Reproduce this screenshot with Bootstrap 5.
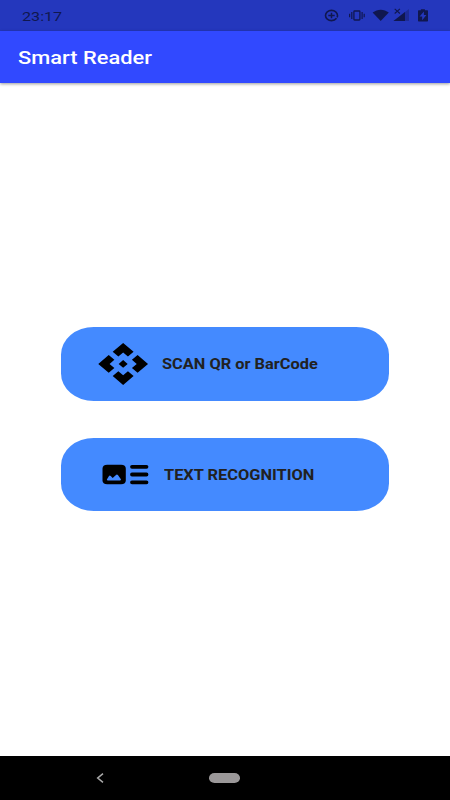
<!DOCTYPE html>
<html lang="en">
<head>
<meta charset="utf-8">
<meta name="viewport" content="width=device-width, initial-scale=1">
<title>Smart Reader</title>
<link href="https://cdn.jsdelivr.net/npm/bootstrap@5.3.0/dist/css/bootstrap.min.css" rel="stylesheet">
<style>
body { font-family: Roboto, sans-serif; height: 800px; overflow: hidden; }
svg { display: block; flex: none; }
.wide { display: inline-block; transform: scaleX(1.187); transform-origin: 0 50%; white-space: nowrap; line-height: 1; }
.status-bar { height: 31px; background: #2437bd; color: #10174f; padding-left: 22px; }
.clock { font-size: 13.6px; letter-spacing: 0; padding-top: 2px; }
.app-bar { height: 51.5px; background: #3149ff; padding-left: 17.5px; box-shadow: 0 1px 3px rgba(0,0,0,.4); z-index: 1; }
.app-title { font-size: 18.4px; font-weight: 500; padding-top: 2px; }
.choices { gap: 37px; padding-top: 244.7px; }
.choice { width: 328px; height: 73.5px; border: 0; border-radius: 32.8px / 27.6px; background: #448aff; color: #212121; padding: 0 0 0 35px; }
.choice-label { font-size: 13.8px; font-weight: 700; padding-top: 2px; }
.nav-strip { height: 44.5px; background: #000; padding-left: 96px; }
.home-pill { width: 31px; height: 9.5px; border-radius: 5.5px / 4.75px; background: #9b9899; margin-left: 105px; }
</style>
<script src="https://cdn.jsdelivr.net/npm/bootstrap@5.3.0/dist/js/bootstrap.bundle.min.js"></script>
</head>
<body class="bg-white d-flex flex-column m-0">
<div class="status-bar d-flex align-items-center flex-shrink-0">
  <span class="wide clock">23:17</span>
  <svg class="ms-auto" width="128" height="31" viewBox="322 0 128 31" fill="#10174f">
    <ellipse cx="331.5" cy="15.5" rx="6" ry="5.1" fill="none" stroke="#10174f" stroke-width="1.6" stroke-dasharray="33.6 1" stroke-dashoffset="-3"/>
    <path d="M328.3 15.5h6.4M331.5 12.8v5.4" stroke="#10174f" stroke-width="1.5"/>
    <rect x="353.9" y="11" width="6" height="9" rx=".7" fill="none" stroke="#10174f" stroke-width="1.3"/>
    <path d="M351.8 12v7M362.1 12v7M349.6 13.7v3.6M364.2 13.7v3.6" stroke="#10174f" stroke-width="1.2"/>
    <path d="M372.6 12.6C377.5 8.7 384 8.7 388.8 12.6L380.7 21z"/>
    <path d="M393.5 21L409 9v12z" opacity=".35"/>
    <path d="M393.5 21L405 12.1V21z"/>
    <path d="M394.7 8.8l5.2 4.7M399.9 8.8l-5.2 4.7" stroke="#10174f" stroke-width="1.1"/>
    <path fill-rule="evenodd" d="M418.7 10.3h2.2V9.2h4v1.1h2.4q.7 0 .7.7v9.7q0 .7-.7.7h-8.6q-.7 0-.7-.7V11q0-.7.7-.7zM423.9 11.5l-4.3 5.1h2.6v3.7l4.2-5.3h-2.5z"/>
  </svg>
</div>
<header class="app-bar d-flex align-items-center flex-shrink-0 text-white position-relative">
  <h1 class="wide app-title m-0">Smart Reader</h1>
</header>
<main class="choices flex-grow-1 d-flex flex-column align-items-center">
  <button type="button" class="choice btn d-flex align-items-center">
    <svg width="54.3" height="45.8" viewBox="0 0 24 24" preserveAspectRatio="none"><path d="M14 12l-2 2-2-2 2-2 2 2zm-2-6l2.12 2.12 2.5-2.5L12 1 7.38 5.62l2.5 2.5L12 6zm-6 6l2.12-2.12-2.5-2.5L1 12l4.62 4.62 2.5-2.5L6 12zm12 0l-2.12 2.12 2.5 2.5L23 12l-4.62-4.62-2.5 2.5L18 12zm-6 6l-2.12-2.12-2.5 2.5L12 23l4.62-4.62-2.5-2.5L12 18z"/></svg>
    <span class="wide choice-label" style="margin-left:11.7px">SCAN QR or BarCode</span>
  </button>
  <button type="button" class="choice btn d-flex align-items-center">
    <svg width="54.3" height="45.8" viewBox="96 451.9 54.3 45.8"><path d="M107.2 464.7h13.9q4.7 0 4.7 4v11.5q0 4-4.7 4h-13.9q-4.7 0-4.7-4v-11.5q0-4 4.7-4z"/><path fill="#448aff" d="M107.8 480.3q-1.4-.2-.8-1.2l2-3.1q.8-1 1.7 0l2 2 3.3-3.2q1-.8 1.9.2l3 4.2q.4.9-.8 1.1z"/><path d="M132 466.7h14.5M132 474.4h14.5M132 482.2h14.5" stroke="#000" stroke-width="3.8" stroke-linecap="round"/></svg>
    <span class="wide choice-label" style="margin-left:13.5px">TEXT RECOGNITION</span>
  </button>
</main>
<footer class="nav-strip d-flex align-items-center flex-shrink-0">
  <svg width="8" height="10" viewBox="0 0 8 10" fill="none" stroke="#aaa" stroke-width="1.5"><path d="M7 .7L1.7 5 7 9.3"/></svg>
  <div class="home-pill"></div>
</footer>
</body>
</html>
